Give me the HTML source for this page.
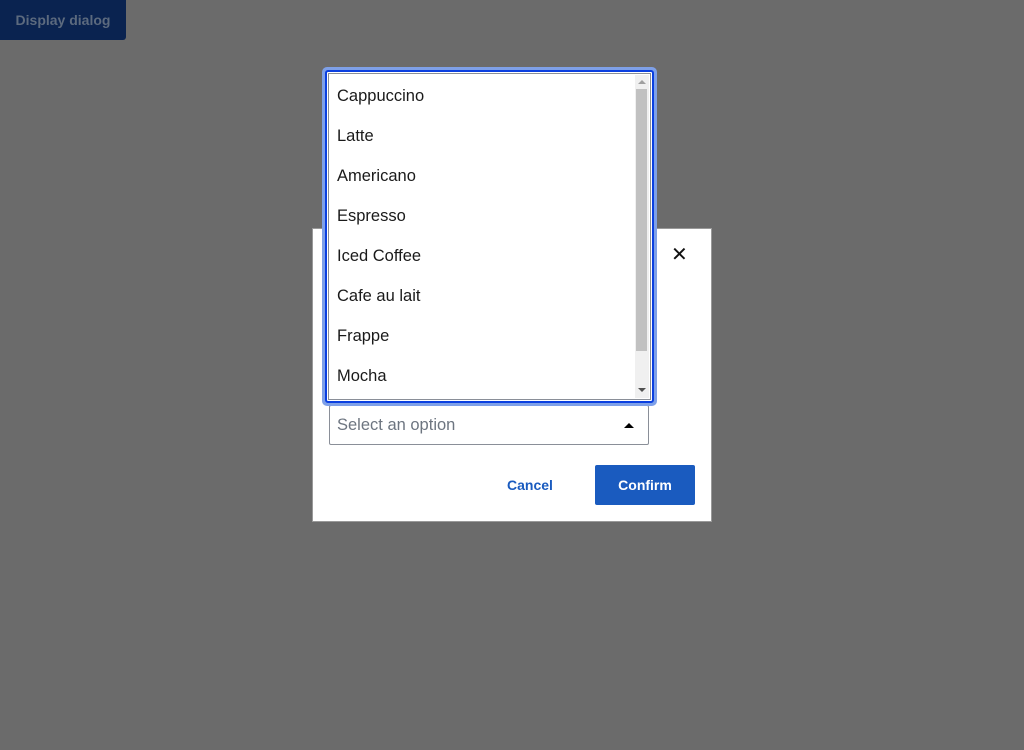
<!DOCTYPE html>
<html><head><style>
body{margin:0;width:1024px;height:750px;background:#6b6b6b;position:relative;overflow:hidden;font-family:"Liberation Sans","DejaVu Sans",sans-serif}
.btn{position:absolute;left:0;top:0;width:126px;height:40px;background:#0a2350;border-radius:0 0 3px 0;color:#5c6a7e;font-size:14px;font-weight:bold;line-height:40px;text-align:center}
.dlg{position:absolute;left:312px;top:228px;width:398px;height:292px;background:#fff;border:1px solid #999}
.x{position:absolute;left:358px;top:13px;font-size:20px;color:#111}
.sel{position:absolute;left:16px;top:176px;width:318px;height:38px;border:1px solid #8a8f98;border-radius:2px;color:#6d7580;font-size:16.5px;line-height:38px;text-indent:7px}
.sel .tri{position:absolute;right:14px;top:17px;width:0;height:0;border-left:5px solid transparent;border-right:5px solid transparent;border-bottom:5px solid #000}
.cancel{position:absolute;left:194px;top:248px;color:#1a5bbf;font-size:14px;font-weight:bold}
.confirm{position:absolute;left:282px;top:236px;width:100px;height:40px;background:#1a5bbf;border-radius:2px;color:#fff;font-size:14px;font-weight:bold;line-height:40px;text-align:center}
.ring{position:absolute;left:322px;top:67px;width:335px;height:339px;background:#7ea0e8;border-radius:5px}
.blue{position:absolute;left:325px;top:70px;width:325px;height:329px;border:2px solid #0a3fe0;border-radius:3px;background:#fff}
.inner{position:absolute;left:1px;top:1px;width:321px;height:325px;border:1px solid #8a8f98;background:#fff}
.item{position:absolute;left:8px;font-size:16.5px;color:#1a1a1a}
.sb{position:absolute;right:1px;top:1px;width:14px;height:323px;background:#f0f0f0}
.thumb{position:absolute;left:1px;top:14px;width:11px;height:262px;background:#c1c1c1}
.up{position:absolute;left:3px;top:5px;border-left:4px solid transparent;border-right:4px solid transparent;border-bottom:4px solid #a0a0a0}
.dn{position:absolute;left:3px;bottom:6px;border-left:4px solid transparent;border-right:4px solid transparent;border-top:4px solid #505050}
</style></head><body>
<div class="btn">Display dialog</div>
<div class="dlg">
<div class="x">✕</div>
<div class="sel">Select an option<div class="tri"></div></div>
<div class="cancel">Cancel</div>
<div class="confirm">Confirm</div>
</div>
<div class="ring"></div>
<div class="blue"><div class="inner">
<div class="item" style="top:13px">Cappuccino</div>
<div class="item" style="top:53px">Latte</div>
<div class="item" style="top:93px">Americano</div>
<div class="item" style="top:133px">Espresso</div>
<div class="item" style="top:173px">Iced Coffee</div>
<div class="item" style="top:213px">Cafe au lait</div>
<div class="item" style="top:253px">Frappe</div>
<div class="item" style="top:293px">Mocha</div>
<div class="sb"><div class="up"></div><div class="thumb"></div><div class="dn"></div></div>
</div></div>
</body></html>
